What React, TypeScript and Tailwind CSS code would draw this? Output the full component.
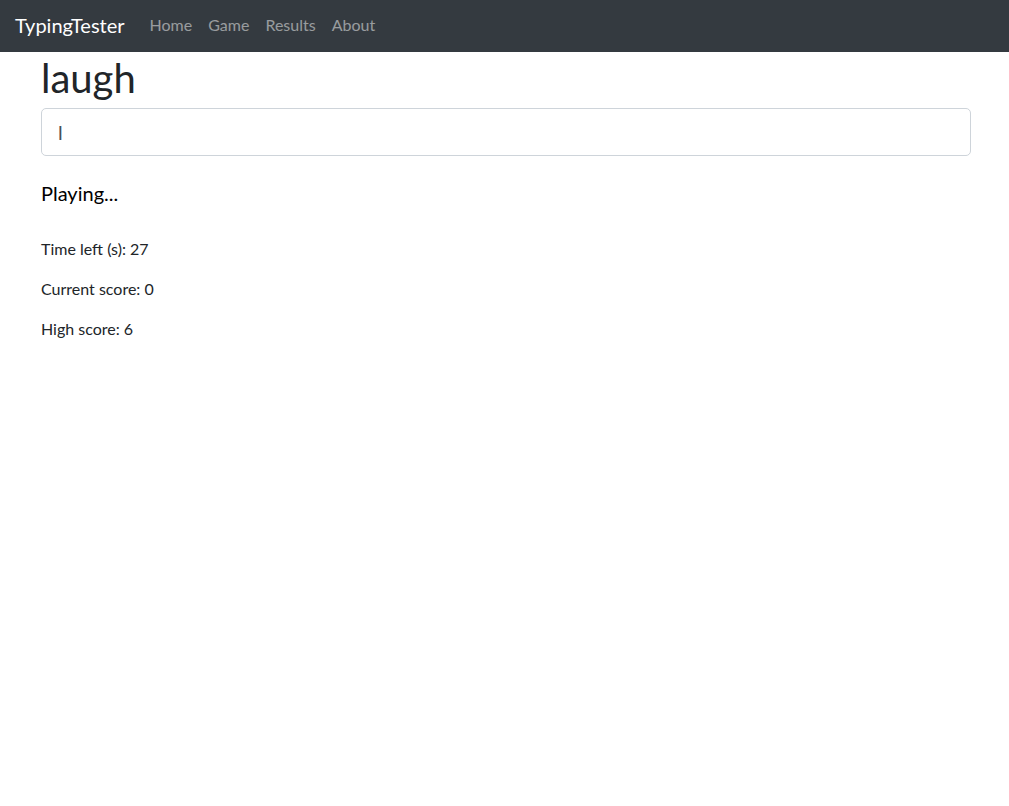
const FONT = "font-['Segoe_UI','Lato','Noto_Sans',sans-serif]";

const LINKS = ["Home", "Game", "Results", "About"];

function NavBar() {
  return (
    <nav className="flex h-[52px] items-center bg-[#343a40] pb-[2px] pl-[15px] pr-4">
      <span className="mr-[17px] text-[20px] leading-[30px] text-white">TypingTester</span>
      <ul className="flex">
        {LINKS.map((l) => (
          <li key={l} className="px-2 text-base leading-6 text-white/50">
            {l}
          </li>
        ))}
      </ul>
    </nav>
  );
}

export default function App() {
  return (
    <div className={`min-h-screen bg-white text-[#212529] ${FONT}`}>
      <NavBar />
      <main className="ml-[41px] w-[930px]">
        <h1 className="mb-[6px] mt-[2px] text-[40px] leading-[48px]">laugh</h1>
        <input
          readOnly
          value="l"
          className="h-12 w-full rounded-[5px] border border-[#ced4da] px-4 text-[20px] text-[#495057] outline-none"
        />
        <h5 className="mb-8 mt-[25px] text-[20px] leading-6 text-black">Playing...</h5>
        <p className="mb-4 leading-6">Time left (s): 27</p>
        <p className="mb-4 leading-6">Current score: 0</p>
        <p className="mb-4 leading-6">High score: 6</p>
      </main>
    </div>
  );
}
